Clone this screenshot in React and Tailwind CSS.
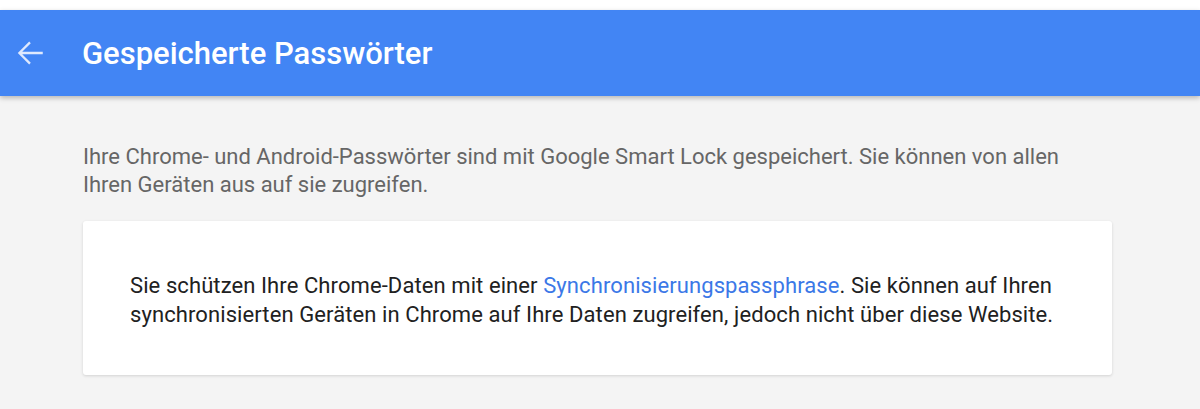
import React from "react";

export default function App() {
  return (
    <div className="w-[1200px] h-[409px] bg-[#f4f4f4] overflow-hidden" style={{ fontFamily: "Roboto, 'Liberation Sans', sans-serif" }}>
      <div className="h-[10px] bg-white" />
      <header className="h-[86px] bg-[#4285f4] flex items-center shadow-[0_2px_5px_rgba(0,0,0,0.26)] relative">
        <div className="w-[82px] flex items-center pl-[13px]">
          <svg width="34" height="34" viewBox="0 0 24 24" fill="none" stroke="#dfe9fd" strokeWidth="1.6" strokeLinecap="butt">
            <path d="M21 12H4.5M12 4.5 4.5 12l7.5 7.5" />
          </svg>
        </div>
        <h1 className="text-white text-[31px] font-medium leading-none">Gespeicherte Passwörter</h1>
      </header>
      <main className="pl-[83px] pt-[47px]">
        <p className="text-[#666666] text-[22px] leading-[28px] w-[1029px]">
          Ihre Chrome- und Android-Passwörter sind mit Google Smart Lock gespeichert. Sie können von allen Ihren Geräten aus auf sie zugreifen.
        </p>
        <div className="mt-[22px] bg-white rounded-[3px] shadow-[0_1px_3px_rgba(0,0,0,0.14)] px-[47px] pt-[50px] pb-[46px] w-[1029px]">
          <p className="text-[#212121] text-[22px] leading-[29px] tracking-[0.09px]">
            Sie schützen Ihre Chrome-Daten mit einer <span className="text-[#3b78e7]">Synchronisierungspassphrase</span>. Sie können auf Ihren synchronisierten Geräten in Chrome auf Ihre Daten zugreifen, jedoch nicht über diese Website.
          </p>
        </div>
      </main>
    </div>
  );
}
